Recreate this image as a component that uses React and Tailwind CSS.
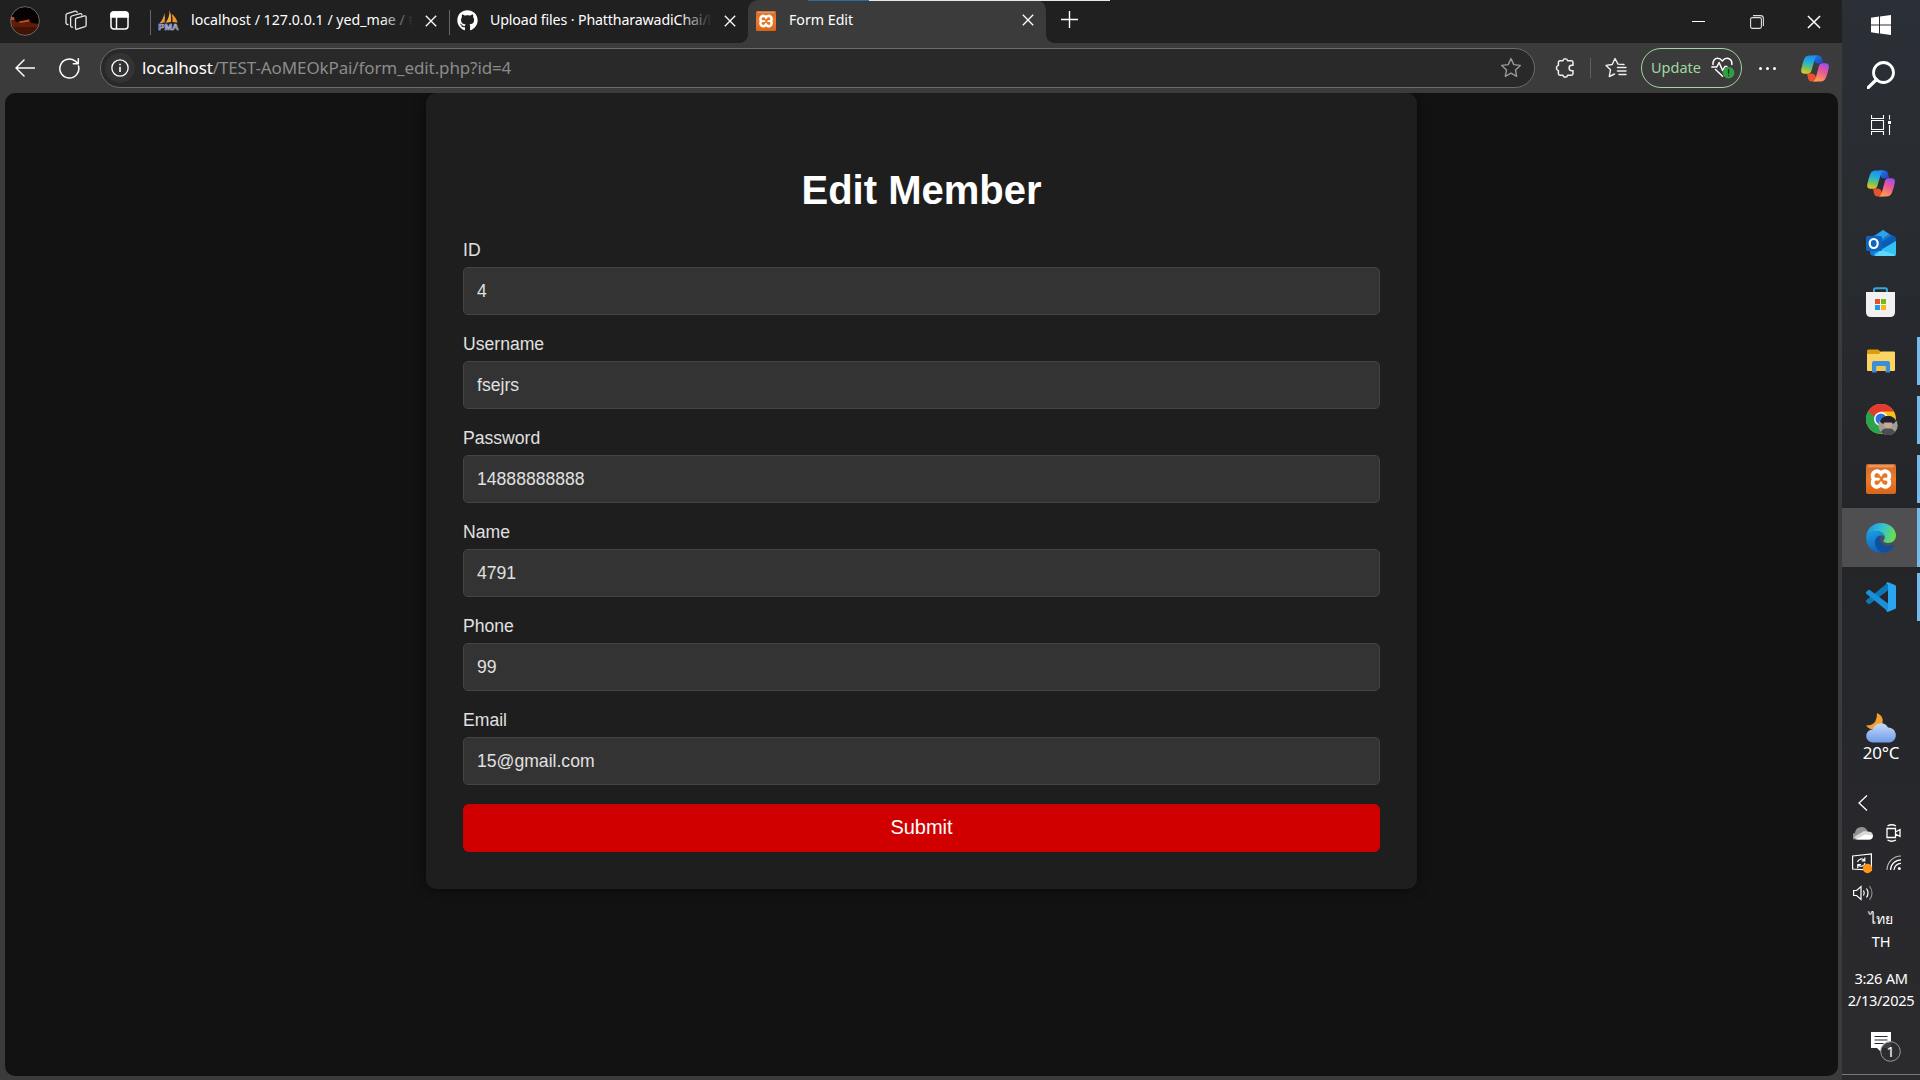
import React from "react";
import { FaGithub } from "react-icons/fa";

const ui = "font-['Noto_Sans','Open_Sans',sans-serif]";

const CloseX = ({ size = 12, className = "" }) => (
  <svg width={size} height={size} viewBox="0 0 12 12" className={className} stroke="#fff" strokeWidth="1.3" fill="none">
    <path d="M.8.8l10.4 10.4M11.2.8L.8 11.2" />
  </svg>
);

const Avatar = () => (
  <svg width="30" height="30" viewBox="0 0 30 30">
    <defs>
      <clipPath id="av"><circle cx="15" cy="15" r="14.5" /></clipPath>
    </defs>
    <g clipPath="url(#av)">
      <rect width="30" height="30" fill="#070202" />
      <rect y="19" width="30" height="11" fill="#421204" />
      <path d="M0 11h4l2 5 9-1 4-2 2 4 9 1v3H0z" fill="#5d1d08" />
      <path d="M0 11h4v3H0zM9 15.5l10-2v2l-9 1.500z" fill="#c4501c" />
    </g>
    <circle cx="15" cy="15" r="14.4" fill="none" stroke="#6a6a6a" />
  </svg>
);

const Workspaces = () => (
  <svg width="22" height="22" viewBox="0 0 22 22" fill="none" stroke="#e8e8e8" strokeWidth="1.3" strokeLinejoin="round" strokeLinecap="round">
    <path d="M10.500 9.600Q10.500 8.500 11.500 8.100L19.500 5.900Q21.100 5.600 21.100 7.200V15.300Q21.100 16.300 20 16.700L12.200 19.200Q10.500 19.600 10.500 18z" />
    <path d="M7.600 17.200Q5.600 17.400 5.600 15.500V7.600Q5.600 6.500 6.700 6L15 3.600Q16.700 3.300 16.900 5" />
    <path d="M3 14.500Q1 14.600 1 12.800V5.200Q1 4 2.200 3.600L10.200 1.100Q11.900.800 12.200 2.300" />
  </svg>
);

const TabActions = () => (
  <svg width="19" height="19" viewBox="0 0 19 19" fill="none" stroke="#fff" strokeWidth="1.5">
    <rect x="1" y="1" width="17" height="17" rx="3" />
    <path d="M1 6V3.500Q1 1 3.500 1h12Q18 1 18 3.500V6z" fill="#fff" />
    <path d="M6.500 6v12" />
  </svg>
);

const PmaIcon = () => (
  <svg width="21" height="21" viewBox="0 0 21 21">
    <path d="M6.300 3.200Q5.500 9 1.600 13.200L6.600 12.600Q7.400 7 6.300 3.200z" fill="#e89a3c" />
    <path d="M11.600 0Q11.800 7 7.600 12.800L13 12Q13.600 5 11.600 0z" fill="#f9a53a" />
    <path d="M13.500 3.800Q15 8 14.400 12L19.500 12.600Q18 7 13.500 3.800z" fill="#f0932b" />
    <text x="0.300" y="20" textLength="20.400" lengthAdjust="spacingAndGlyphs" fontFamily="Liberation Sans" fontWeight="bold" fontSize="8.500" fill="#4a5594" stroke="#c5cae6" strokeWidth=".5">PMA</text>
  </svg>
);

const Xampp = ({ size, id }) => (
  <svg width={size} height={size} viewBox="0 0 30 30">
    <defs>
      <linearGradient id={id} x1="0" y1="0" x2="0" y2="1">
        <stop offset="0" stopColor="#d06a2a" />
        <stop offset=".5" stopColor="#ee7a26" />
        <stop offset="1" stopColor="#d8651a" />
      </linearGradient>
    </defs>
    <rect width="30" height="30" rx="2" fill={`url(#${id})`} />
    <rect x="2" y="1" width="26" height="2.500" rx="1" fill="#e9a880" opacity=".7" />
    <path d="M9.500 7.500C12 6.300 13.500 8.600 15 8.600s3-2.300 5.500-1.100c3.800 1.800 3.500 6 1.500 7.700 2 1.700 2.200 6-1.500 7.500-2.500 1-4-1.600-5.500-1.600s-3 2.600-5.500 1.600C5.800 21.200 6 16.900 8 15.200 6 13.500 5.700 9.300 9.500 7.500z" fill="none" stroke="#fff" strokeWidth="3.800" strokeLinejoin="round" />
    <path d="M15 9v2M15 19v2M8 15.200h4.500M22 15.200h-3.500" stroke="#fff" strokeWidth="2.800" strokeLinecap="round" />
  </svg>
);

const Copilot = ({ id }) => (
  <svg width="28" height="27" viewBox="0 0 28 27">
    <defs>
      <linearGradient id={id + "a"} x1=".4" y1="0" x2=".2" y2="1">
        <stop offset="0" stopColor="#1d8ff0" /><stop offset=".35" stopColor="#23b0d8" />
        <stop offset=".65" stopColor="#6cc06a" /><stop offset="1" stopColor="#f2c811" />
      </linearGradient>
      <linearGradient id={id + "b"} x1=".7" y1="0" x2=".3" y2="1">
        <stop offset="0" stopColor="#a44bea" /><stop offset=".45" stopColor="#ea5a92" /><stop offset="1" stopColor="#ffa04c" />
      </linearGradient>
      <linearGradient id={id + "c"} x1="0" y1="0" x2="1" y2="1">
        <stop offset="0" stopColor="#1b7fe8" /><stop offset="1" stopColor="#2340c0" />
      </linearGradient>
    </defs>
    <path d="M12 .500h5.500Q20 .500 20.800 3l1.400 5.500H17Q14.500 8.500 13.500 6z" fill={`url(#${id}c)`} />
    <path d="M16 26.500h-5.500Q8 26.500 7.200 24L6 18.500h5q2.500 0 3.500 2.500z" fill="#e8502e" />
    <path d="M8.500.500h8Q14.600 1 13.700 4.500L10.500 15.500Q9.500 18.700 6.500 18.700H3.500Q-.500 18.700.300 14.300 1.200 9.500 3 4.500 4.500.500 8.500.500z" fill={`url(#${id}a)`} />
    <path d="M19.500 26.500H12q2-.500 2.900-4L17.800 11.500Q18.700 8.300 21.700 8.300h2.800q4 0 3.300 4.400-.900 4.800-2.800 9.800-1.500 4-5.500 4z" fill={`url(#${id}b)`} />
  </svg>
);

const Star = () => (
  <svg width="22" height="22" viewBox="0 0 22 22" fill="none" stroke="#999" strokeWidth="1.4" strokeLinejoin="round">
    <path d="M11 1.600l2.800 6 6.500.800-4.800 4.500 1.200 6.500L11 16.200l-5.700 3.200 1.200-6.500L1.700 8.400l6.500-.800z" />
  </svg>
);

const Puzzle = () => (
  <svg width="20" height="22" viewBox="0 0 20 22" fill="none" stroke="#f0f0f0" strokeWidth="1.500" strokeLinejoin="round">
    <path d="M5 3.800h2.800a2.500 2.500 0 0 1 4.900 0h3.600q1.700 0 1.700 1.700v2.800h-1.200a2.700 2.700 0 0 0 0 5.400H18v2.800q0 1.700-1.700 1.700h-3.600a2.500 2.500 0 0 1-4.900 0H5q-1.600 0-1.600-1.700v-2.900a2.700 2.700 0 0 1 0-5.200V5.500Q3.400 3.800 5 3.800z" />
  </svg>
);

const FavList = () => (
  <svg width="22" height="22" viewBox="0 0 22 22" fill="none" stroke="#f0f0f0" strokeWidth="1.400" strokeLinejoin="round" strokeLinecap="round">
    <path d="M19 7.500l-6-.400L10 1.500 7.200 7.500l-6.200.900 4.500 4.300-1.200 6.800L9.500 17M12.500 10.500H21M12.500 14H21M14 17.500h7" />
  </svg>
);

const HeartPulse = () => (
  <svg width="24" height="22" viewBox="0 0 24 22" fill="none" stroke="#fff" strokeWidth="1.500" strokeLinejoin="round" strokeLinecap="round">
    <path d="M2 7.500C1.500 3.500 4 1.300 6.500 1.300c2 0 3.500 1 4.800 2.700 1.300-1.700 2.800-2.700 4.800-2.700 3 0 5.300 2.700 4.700 6.200M4.500 12.500l7 6.800M.800 10h5l2.300-4.500 3.500 8 2.300-4h2" />
    <circle cx="17.600" cy="15.700" r="5.800" fill="#2fa043" stroke="none" />
    <path d="M17.600 12.600v3.600M17.600 18.400v.2" stroke="#12380f" strokeWidth="1.400" />
  </svg>
);

function Tab({ icon, title, fade }) {
  return (
    <div className="flex h-[41px] w-[255px] items-center">
      <div className="flex w-[33px] shrink-0 items-center">{icon}</div>
      <div className="relative -mt-[2px] min-w-0 flex-1 overflow-hidden whitespace-nowrap text-[14.200px] leading-5 text-white">
        {title}
        {fade && <span className="absolute right-0 top-0 h-5 w-8 bg-linear-to-r from-transparent to-[#202020]" />}
      </div>
    </div>
  );
}

function BrowserTop() {
  return (
    <div className="flex h-[43px] shrink-0 bg-[#202020]">
      <div className="flex h-[41px] w-[150px] shrink-0 items-center pl-[10px]">
        <Avatar />
        <div className="ml-[25px]"><Workspaces /></div>
        <div className="ml-[23px]"><TabActions /></div>
      </div>
      <div className="mt-[10px] h-[25px] w-px bg-[#666]" />
      <div className="flex h-[41px] w-[298px] items-center pl-[7px]">
        <Tab icon={<PmaIcon />} title="localhost / 127.0.0.1 / yed_mae / t" fade />
        <CloseX className="ml-[12px]" />
      </div>
      <div className="mt-[10px] h-[25px] w-px bg-[#666]" />
      <div className="flex h-[41px] w-[298px] items-center pl-[7px]">
        <Tab icon={<FaGithub size={21} color="#fff" />} title={<span className="tracking-[-0.130px]">Upload files · PhattharawadiChai/l</span>} fade />
        <CloseX className="ml-[12px]" />
      </div>
      <div className="relative flex h-[43px] w-[298px] rounded-t-[10px] bg-[#3b3b3b] pl-2">
        <div className="absolute -left-2 bottom-0 size-2 bg-[radial-gradient(circle_at_0_0,#202020_7.500px,#3b3b3b_8px)]" />
        <div className="absolute -right-2 bottom-0 size-2 bg-[radial-gradient(circle_at_100%_0,#202020_7.500px,#3b3b3b_8px)]" />
        <div className="absolute left-[60px] top-0 h-px w-[61px] bg-[#2a6da3]" />
        <div className="absolute left-[121px] top-0 h-px w-[241px] bg-[#e8e8e8]" />
        <Tab icon={<Xampp size={20} id="xt" />} title="Form Edit" />
        <CloseX className="ml-[11px] mt-[14px]" />
      </div>
      <svg width="17" height="17" viewBox="0 0 17 17" className="ml-[15px] mt-[11px]" stroke="#fff" strokeWidth="1.400"><path d="M8.500 0v17M0 8.500h17" /></svg>
      <div className="ml-auto flex h-[43px] items-center">
        <div className="flex w-[58px] justify-center"><div className="h-px w-[13px] bg-white" /></div>
        <div className="flex w-[58px] justify-center pl-[2px]">
          <svg width="14" height="14" viewBox="0 0 14 14" fill="none" stroke="#ddd" strokeWidth="1.100">
            <rect x=".6" y="2.600" width="10.800" height="10.800" rx="1.600" />
            <path d="M3 .600h7.500q2.900 0 2.900 2.900V11" />
          </svg>
        </div>
        <div className="flex w-[57px] justify-center"><CloseX size={14} /></div>
      </div>
    </div>
  );
}

function Toolbar() {
  return (
    <div className="flex h-[50px] shrink-0 items-center bg-[#3b3b3b] pl-[15px]">
      <svg width="20" height="18" viewBox="0 0 20 18" fill="none" stroke="#fff" strokeWidth="1.500" strokeLinecap="round" strokeLinejoin="round"><path d="M19.500 9H1M9 1L1 9l8 8" /></svg>
      <svg width="21" height="21" viewBox="0 0 21 21" className="ml-[24px]" fill="none" stroke="#fff" strokeWidth="1.500" strokeLinecap="round" strokeLinejoin="round"><path d="M19.500 8A9.500 9.500 0 1 1 16 2.900l3 2.600M19.300.800v5h-5" /></svg>
      <div className="ml-[20px] flex h-[40px] w-[1435px] items-center rounded-full border border-[#6c6c6c] bg-[#292929] pl-1 pr-[12px]">
        <div className="flex size-[30px] items-center justify-center rounded-full bg-[#333]">
          <svg width="18" height="18" viewBox="0 0 19 19" fill="none" stroke="#fff" strokeWidth="1.400"><circle cx="9.500" cy="9.500" r="8.600" /><path d="M9.500 8.300v5.500M9.500 5v1.600" strokeWidth="1.700" /></svg>
        </div>
        <div className="-mt-px ml-[7px] whitespace-nowrap text-[17px] leading-6 tracking-[-0.120px] text-[#8c8c8c]"><span className="text-white">localhost</span>/TEST-AoMEOkPai/form_edit.php?id=4</div>
        <div className="ml-auto"><Star /></div>
      </div>
      <div className="ml-[20px]"><Puzzle /></div>
      <div className="ml-[15px] h-5 w-px bg-[#606060]" />
      <div className="ml-[14px]"><FavList /></div>
      <div className="ml-[14px] flex h-[40px] w-[101px] items-center rounded-full border border-[#9fd89f] pl-[9px]">
        <span className="text-[14.500px] text-[#9fd89f]">Update</span>
        <div className="ml-[10px]"><HeartPulse /></div>
      </div>
      <div className="ml-[17px] flex gap-[4px]">
        <i className="size-[3px] rounded-full bg-white" /><i className="size-[3px] rounded-full bg-white" /><i className="size-[3px] rounded-full bg-white" />
      </div>
      <div className="ml-[25px]"><Copilot id="ct" /></div>
    </div>
  );
}

const fields = [
  ["ID", "4"],
  ["Username", "fsejrs"],
  ["Password", "14888888888"],
  ["Name", "4791"],
  ["Phone", "99"],
  ["Email", "15@gmail.com"],
];

function Page() {
  return (
    <div className="mx-[5px] mb-1 h-[983px] w-[1833px] overflow-hidden rounded-[10px] bg-[#121212] font-['Liberation_Sans',Arial,sans-serif]">
      <form className="ml-[421px] h-[796px] w-[991px] rounded-[10px] bg-[#1e1e1e] px-[37px] pt-[73px] shadow-[0_0_12px_rgba(0,0,0,0.5)]">
        <h1 className="h-[72px] text-center text-[40px] font-bold leading-[48px] text-white">Edit Member</h1>
        {fields.map(([label, value]) => (
          <div key={label} className="h-[94px]">
            <label className="block h-[29px] text-[17.600px] leading-[25px] text-[#e0e0e0]">{label}</label>
            <input readOnly value={value} className="block h-[48px] w-full rounded-[5px] border border-[#444] bg-[#333] px-[13px] text-[17.600px] text-[#e0e0e0] outline-none" />
          </div>
        ))}
        <button type="button" className="mt-[2px] block h-[48px] w-full rounded-[6px] bg-[#d00000] pb-[2px] text-[20px] leading-[46px] text-white">Submit</button>
      </form>
    </div>
  );
}

const Slot = ({ children, h = "h-[59px]", running, active }) => (
  <div className={`flex w-full items-center ${h} ${active ? "bg-[#4f4f51]" : ""}`}>
    <div className="flex flex-1 justify-center pl-[2px]">{children}</div>
    <div className={`w-[3px] ${active ? "h-[59px]" : "h-[48px]"} ${running ? "bg-[#76b9ed]" : ""}`} />
  </div>
);

const Outlook = () => (
  <svg width="30" height="26" viewBox="0 0 30 26">
    <path d="M4 8L17 0l13 8v15q0 3-3 3H8q-4 0-4-4z" fill="#1877d0" />
    <path d="M8 7L17 0l6 4-13 9z" fill="#2fa3ea" />
    <path d="M12 14L27 5l3 3v4L14 20z" fill="#0a5cb5" />
    <path d="M8 24l22-13v12q0 3-3 3H9z" fill="#34c2f5" />
    <path d="M15 20l15 5q-1 1-3 1H9z" fill="#5fd8fb" />
    <rect y="6" width="16" height="15" rx="1.500" fill="#0f64c0" />
    <ellipse cx="7.700" cy="13.500" rx="4" ry="4.500" fill="none" stroke="#fff" strokeWidth="2.200" />
  </svg>
);

const Store = () => (
  <svg width="29" height="30" viewBox="0 0 29 30">
    <path d="M8 6V3q0-1.700 1.700-1.700h9.600Q21 1.300 21 3v3" fill="none" stroke="#3aa5dc" strokeWidth="2" />
    <path d="M0 5h29v20q0 5-5 5H5q-5 0-5-5z" fill="#f1f1f1" />
    <path d="M9 12h5v5H9z" fill="#e8502a" /><path d="M15 12h5v5h-5z" fill="#7db51c" />
    <path d="M9 18h5v5H9z" fill="#1d9de4" /><path d="M15 18h5v5h-5z" fill="#f9b90f" />
  </svg>
);

const Explorer = () => (
  <svg width="28" height="24" viewBox="0 0 28 24">
    <path d="M0 2q0-1.500 1.500-1.500H11L14 3v3H0z" fill="#dc9c12" />
    <path d="M0 5h12l2-2.500h13q1 0 1 1V21q0 1-1 1H1q-1 0-1-1z" fill="#fcd462" />
    <path d="M5 23.500V14q0-2 2-2h14q2 0 2 2v9.500h-4.500V17h-9v6.500z" fill="#3c8fd6" />
    <path d="M9.500 17h9v5h-9z" fill="#f3c44f" />
  </svg>
);

const Chrome = () => (
  <svg width="32" height="31" viewBox="0 0 32 31">
    <defs><clipPath id="face"><circle cx="22" cy="21.500" r="9.700" /></clipPath></defs>
    <circle cx="15" cy="15" r="15" fill="#fbc116" />
    <path d="M2 7.500A15 15 0 0 0 15 30L21.500 18.800 15 15z" fill="#2ba24c" />
    <path d="M2 7.500L8.500 18.800 15 10z" fill="#2ba24c" />
    <path d="M2 7.500A15 15 0 0 1 28 7.500H15L8 12z" fill="#e33b2e" />
    <circle cx="15" cy="15" r="7" fill="#fff" />
    <circle cx="15" cy="15" r="5.500" fill="#2d73e0" />
    <g clipPath="url(#face)">
      <rect x="12" y="11" width="20" height="20" fill="#a39e92" />
      <path d="M14 17.500q0-6 8-6t8 5.500l-2 2.500H16z" fill="#20232f" />
      <path d="M18 18.500h8q.500 6-4 6.500-4.500-.500-4-6.500z" fill="#c9a893" />
      <path d="M14 31q1-6 5.500-6.500h5Q29 25.500 30 31z" fill="#4b4d55" />
    </g>
  </svg>
);

const Edge = () => (
  <svg width="30" height="30" viewBox="0 0 30 30">
    <defs>
      <linearGradient id="e1" x1="0" y1=".3" x2="1" y2=".5"><stop offset="0" stopColor="#1f93df" /><stop offset=".5" stopColor="#32c0d4" /><stop offset="1" stopColor="#6be04b" /></linearGradient>
      <linearGradient id="e2" x1=".3" y1="0" x2=".5" y2="1"><stop offset="0" stopColor="#1b9ae4" /><stop offset="1" stopColor="#0f63bd" /></linearGradient>
    </defs>
    <path d="M.200 13.500C1 5.500 7 0 15 0c8.500 0 15 5.800 15 12.500 0 4.500-3.500 7.500-7.500 7.500-3.500 0-5.500-1.200-5-2.300.5-1 1.300-1.500 1.300-3.200C18.800 11 15.500 8 10.500 8 5 8 1.500 11 .200 13.500z" fill="url(#e1)" />
    <path d="M.200 13.500C2 9.500 6 8 10 8c5 0 8.600 2.800 8.800 6.300-1-1.300-2.500-2-4-1.800C10 13 8 18 9.500 22.500c1 3.500 4 6.500 7.500 7.300C8 31-.800 24 .200 13.500z" fill="url(#e2)" />
    <path d="M14.500 12.500C10 13 8 18 9.500 22.500c1 3.500 4 6.500 7.500 7.300 5-.300 9-3 11.300-6.800.5-.800-.3-1.300-1-.9C19 25.500 12.500 20 14.500 12.500z" fill="#10519f" />
  </svg>
);

const VsCode = () => (
  <svg width="30" height="30" viewBox="0 0 30 30">
    <path d="M0 20l3 2.500L22 8.500V.500L.500 18q-1 1-.5 2z" fill="#0f74b8" />
    <path d="M0 10l3-2.500L22 21.500v8L.500 12q-1-1-.5-2z" fill="#1b8fdb" />
    <path d="M21.500 0l7.500 3q1 .500 1 1.500v21q0 1-1 1.500l-7.500 3-1.500-1.500 2-1V2.500l-2-1z" fill="#2aa5f0" />
  </svg>
);

function Taskbar() {
  return (
    <div className="flex h-[1080px] w-[78px] shrink-0 flex-col items-center bg-linear-to-b from-[#2b3036] via-[#242529] to-[#2b2b2e] text-white">
      <Slot h="h-[50px]">
        <svg width="20" height="20" viewBox="0 0 20 20" fill="#fff"><path d="M0 2.800l8-1.200V9.500H0zM9 1.400L20 0v9.500H9zM0 10.500h8v8L0 17.300zM9 10.500h11V20L9 18.600z" /></svg>
      </Slot>
      <Slot h="h-[50px]">
        <svg width="28" height="28" viewBox="0 0 28 28" fill="none" stroke="#fff" strokeWidth="2.800"><circle cx="16.500" cy="11.500" r="10" /><path d="M9.500 18.500L.800 27" strokeWidth="3.200" strokeLinecap="round" /></svg>
      </Slot>
      <Slot h="h-[49px]">
        <svg width="20" height="20" viewBox="0 0 20 20" fill="none" stroke="#fff" strokeWidth="1.100"><path d="M.500 0v3.500h12V0M.500 20v-3.500h12V20M.500 5.500h12v9H.500zM18.500 0v4.500M18.500 10v10" /><path d="M17 6h3v3h-3z" fill="#fff" stroke="none" /></svg>
      </Slot>
      <div className="h-[5px]" />
      <Slot><Copilot id="cs" /></Slot>
      <Slot><Outlook /></Slot>
      <Slot><Store /></Slot>
      <Slot running><Explorer /></Slot>
      <Slot running><div className="pl-[2px]"><Chrome /></div></Slot>
      <Slot running><Xampp size={30} id="xs" /></Slot>
      <Slot running active><Edge /></Slot>
      <Slot running><VsCode /></Slot>
      <div className="mt-[87px] flex w-full flex-col items-center">
        <svg width="31" height="30" viewBox="0 0 31 30">
          <defs><linearGradient id="cl" x1="0" y1="0" x2="0" y2="1"><stop offset="0" stopColor="#c5dbfa" /><stop offset="1" stopColor="#6f9be8" /></linearGradient></defs>
          <path d="M11 0q7 3 5.500 10-2 6-9 6.500Q3 16.500 0 12.500 11 13 11 0z" fill="#f5a02c" />
          <path d="M7 29.500a6.500 6.500 0 0 1-.500-13A8.500 8.500 0 0 1 22 14.500a7.600 7.600 0 0 1 2 15z" fill="url(#cl)" />
        </svg>
        <span className="-mt-[1px] text-[17px] leading-[22px] tracking-[-0.200px]">20°C</span>
      </div>
      <div className="mt-[25px] grid w-[78px] grid-cols-[31px_31px] items-center justify-items-center gap-x-0 pl-[5px]">
        <div className="col-span-2 flex h-[28px] w-full items-center pl-[11px]">
          <svg width="10" height="16" viewBox="0 0 10 16" fill="none" stroke="#fff" strokeWidth="1.300"><path d="M9 .500L1 8l8 7.500" /></svg>
        </div>
        <div className="flex h-[31px] items-center">
          <svg width="20" height="14" viewBox="0 0 20 14"><path d="M3 13.500A3.200 3.200 0 0 1 2 7 6.500 6.500 0 0 1 14 4l2 4z" fill="#929292" /><path d="M4 13.500L1 11l10-6 7 1q2.500 2 2 4.500t-3 3z" fill="#d8d8d8" /><path d="M3 13.500l9-5 7.500 1q.500 3.500-3 4z" fill="#fff" /></svg>
        </div>
        <div className="flex h-[31px] items-center">
          <svg width="15" height="18" viewBox="0 0 15 18" fill="none" stroke="#fff" strokeWidth="1.300"><path d="M1 4.500h8.500v9H1zM9.500 8L14 5.500v7L9.500 10M1.500 2Q5.500-.500 10 2M1.500 16Q5.500 18.500 10 16" /></svg>
        </div>
        <div className="flex h-[30px] items-center">
          <svg width="21" height="21" viewBox="0 0 21 21" fill="none" stroke="#fff" strokeWidth="1.200"><path d="M.600 3L19.400.800v16.400L.600 16zM5.500 9a4 4 0 0 1 7-1.500M12.800 4.500v3.300H9.700M13 10a4 4 0 0 1-7 1.800M5.800 15v-3.300H9" /><circle cx="15.500" cy="15.500" r="4.700" fill="#ff9416" stroke="none" /></svg>
        </div>
        <div className="flex h-[30px] items-center">
          <svg width="16" height="16" viewBox="0 0 16 16" fill="none" stroke="#fff" strokeWidth="1.200"><path d="M1 15A14 14 0 0 1 15 1" stroke="#bbb" /><path d="M4.500 15A10.500 10.500 0 0 1 15 4.800M8 15a7 7 0 0 1 7-6.600" /><circle cx="13.300" cy="13.500" r="1.500" fill="#fff" stroke="none" /></svg>
        </div>
        <div className="flex h-[30px] items-center">
          <svg width="20" height="16" viewBox="0 0 20 16" fill="none" stroke="#fff" strokeWidth="1.200"><path d="M.600 5.500h3L8 1.500v13L3.600 10.500h-3zM10.500 5.500q1.500 2.500 0 5M13.500 3.500q3 4.500 0 9" /><path d="M16.500 1q5 7 0 14" stroke="#888" /></svg>
        </div>
      </div>
      <div className="flex w-full flex-col items-center whitespace-nowrap text-[14.600px] leading-[22px] tracking-[-0.300px]">
        <span className="text-[14px]">ไทย</span>
        <span>TH</span>
        <span className="mt-[15px]">3:26 AM</span>
        <span>2/13/2025</span>
      </div>
      <div className="mt-[21px] h-[31px] pl-[10px]">
        <svg width="32" height="31" viewBox="0 0 32 31">
          <path d="M1 0h20v16H11v4l-4-4H1z" fill="#fff" />
          <path d="M4.500 4.500h13M4.500 8h13M4.500 11.500h9" stroke="#28292c" strokeWidth="1.200" />
          <circle cx="20.500" cy="19.500" r="9.800" fill="#2d2e31" fillOpacity=".9" stroke="#999" />
          <text x="20.500" y="25" textAnchor="middle" fontSize="15" fill="#fff" fontFamily="Noto Sans">1</text>
        </svg>
      </div>
      <div className="mt-auto h-[6px] w-full border-t border-[#77787a]" />
    </div>
  );
}

export default function App() {
  return (
    <div className={`flex h-[1080px] w-[1920px] overflow-hidden bg-[#3b3b3b] ${ui}`}>
      <div className="flex w-[1842px] shrink-0 flex-col">
        <BrowserTop />
        <Toolbar />
        <Page />
      </div>
      <Taskbar />
    </div>
  );
}
